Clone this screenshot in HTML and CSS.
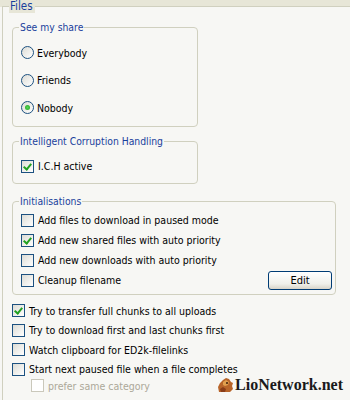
FILE: index.html
```html
<!DOCTYPE html>
<html>
<head>
  <meta charset="UTF-8" />
  <title>Files options</title>
  <link rel="stylesheet" href="styles.css">
</head>
<body>

  <fieldset class="files">
    <legend>Files</legend>

    <fieldset class="group share">
      <legend>See my share</legend>
      <div class="opt radio-row"><span class="radio"></span>Everybody</div>
      <div class="opt radio-row"><span class="radio"></span>Friends</div>
      <div class="opt radio-row"><span class="radio on"></span>Nobody</div>
    </fieldset>

    <fieldset class="group ich">
      <legend>Intelligent Corruption Handling</legend>
      <div class="opt"><span class="check on"></span>I.C.H active</div>
    </fieldset>

    <fieldset class="group init">
      <legend>Initialisations</legend>
      <div class="opt"><span class="check"></span>Add files to download in paused mode</div>
      <div class="opt"><span class="check on"></span>Add new shared files with auto priority</div>
      <div class="opt"><span class="check"></span>Add new downloads with auto priority</div>
      <div class="opt">
        <span class="check"></span>Cleanup filename
        <button class="edit-btn">Edit</button>
      </div>
    </fieldset>

    <div class="loose">
      <div class="opt"><span class="check on"></span>Try to transfer full chunks to all uploads</div>
      <div class="opt"><span class="check"></span>Try to download first and last chunks first</div>
      <div class="opt"><span class="check"></span>Watch clipboard for ED2k-filelinks</div>
      <div class="opt"><span class="check"></span>Start next paused file when a file completes</div>
      <div class="opt sub disabled"><span class="check off"></span>prefer same category</div>
    </div>
  </fieldset>

  <!-- site watermark in the corner -->
  <div class="watermark">
    <svg width="18" height="16" viewBox="0 0 18 16">
      <path d="M3 15 L2 10 L4 6 L7 3 L10 1 L13 2 L15 5 L17 6 L16 9 L17 12 L14 15 Z" fill="#b8652a"/>
      <path d="M7 5 L10 3 L13 5 L12 8 L9 9 L7 8 Z" fill="#e0a050"/>
      <path d="M4 12 L7 10 L10 12 L9 15 L5 15 Z" fill="#8a3d18"/>
      <circle cx="11" cy="6" r="1" fill="#3a1a08"/>
    </svg>
    <span>LioNetwork.net</span>
  </div>

</body>
</html>
```

FILE: styles.css
```css
body {
  margin: 0;
  height: 400px;
  overflow: hidden;
  position: relative;
  font-family: "DejaVu Sans Condensed", "Liberation Sans", Arial, sans-serif;
  font-size: 10.5px;
  color: #000;
  background: linear-gradient(#e7e6d7 0, #e7e6d7 7px, #f7f7f4 7px);
}
fieldset {
  box-sizing: border-box;
  border: 1px solid #d0d0bf;
  margin: 0;
}
legend {
  color: #1a3f9c;
  line-height: 13px;
  padding: 0 1px;
}
.files {
  margin: 0 0 0 2px;
  padding: 8px 0 0 9px;
  border-right: none;
  border-bottom: none;
  height: 400px;
}
.files > legend {
  background: #e7e6d7;
  font-size: 11.5px;
  margin-left: -3px;
  padding: 0 2px 0 1px;
}
.group {
  border-radius: 4px;
  padding: 0 0 0 8px;
}
.group legend {
  font-size: 10.3px;
  margin-left: -2px;
}
.share {
  width: 186px;
  height: 106px;
  margin-bottom: 8px;
}
.ich {
  width: 186px;
  height: 49px;
  margin-bottom: 11px;
}
.init {
  width: 324px;
  height: 100px;
}
.opt {
  display: flex;
  align-items: center;
  height: 20px;
  white-space: nowrap;
}
.radio-row {
  height: 27.5px;
}
.share .radio-row:first-of-type {
  margin-top: 5px;
}
.ich .opt {
  margin-top: 8px;
}
.init .opt:first-of-type {
  margin-top: 2px;
}
.check, .radio {
  width: 11px;
  height: 11px;
  border: 1px solid #1c5180;
  background: linear-gradient(135deg, #dcdcd5, #ffffff);
  margin-right: 4px;
  flex: none;
  position: relative;
}
.radio {
  border-radius: 50%;
  margin-right: 3px;
}
.radio.on::after {
  content: "";
  position: absolute;
  left: 3px;
  top: 3px;
  width: 5px;
  height: 5px;
  border-radius: 50%;
  background: radial-gradient(#55d755, #21a121);
}
.check.on::after {
  content: "";
  position: absolute;
  left: 3px;
  top: 1px;
  width: 3px;
  height: 6px;
  border: solid #21a121;
  border-width: 0 2px 2px 0;
  transform: rotate(40deg);
}
.check.off {
  border-color: #cac8bb;
  background: #fff;
}
.edit-btn {
  margin-left: auto;
  margin-right: 3px;
  width: 64px;
  height: 19px;
  font-family: inherit;
  font-size: 11px;
  color: #000;
  border: 1px solid #003c74;
  border-radius: 3px;
  background: linear-gradient(#ffffff, #f0f0ea 70%, #d8d4c8);
  padding: 0;
}
.loose {
  margin-top: 6px;
}
.loose .opt {
  height: 19.5px;
}
.loose .sub {
  padding-left: 19px;
  height: 13px;
}
.disabled {
  color: #aca899;
}
.watermark {
  position: absolute;
  right: 7px;
  bottom: 6px;
  display: flex;
  align-items: center;
  gap: 1px;
  font-family: "Liberation Serif", "Times New Roman", serif;
  font-weight: bold;
  font-size: 16px;
  color: #1a1a1a;
}
```
